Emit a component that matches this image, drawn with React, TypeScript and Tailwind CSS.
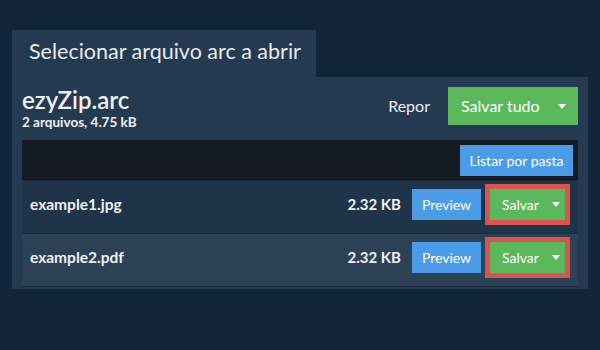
import React from "react";

function Caret() {
  return (
    <span className="inline-block w-0 h-0 border-t-[5px] border-t-white border-x-[4.5px] border-x-transparent" />
  );
}

function Row({ name, size, bg }: { name: string; size: string; bg: string }) {
  return (
    <div className={`flex items-center pl-[8px] pr-[8px] pt-[8px] pb-[13px] border-t border-[#1a2a3c] ${bg}`}>
      <div className="flex-1 text-[15.5px] font-bold text-[#eef0f2]">{name}</div>
      <div className="text-[15px] font-bold text-[#eef0f2] mr-[11px]">{size}</div>
      <button className="w-[69px] h-[31px] bg-[#4b9be6] text-white text-[14px] mr-[4px] flex items-center justify-center">
        Preview
      </button>
      <div className="border-[5px] border-[#d9534f] -my-[5px]">
        <button className="w-[75px] h-[31px] bg-[#5cb85c] text-white text-[14px] flex items-center pl-[12px]">
          <span>Salvar</span>
          <span className="ml-[13px] flex items-center">
            <Caret />
          </span>
        </button>
      </div>
    </div>
  );
}

export default function App() {
  return (
    <div
      className="w-[600px] h-[350px] bg-[#12243a] pt-[30px] px-[12px]"
      style={{ fontFamily: "Lato, 'Open Sans', sans-serif" }}
    >
      <div className="w-[304px] h-[47px] bg-[#243a50] pl-[17px] pt-[6px] text-[21.5px] leading-[30px] text-[#e8ebee]">
        Selecionar arquivo arc a abrir
      </div>
      <div className="w-[576px] bg-[#243a50] px-[10px] pb-[2px]">
        <div className="h-[63px] flex items-start justify-between pt-[10px]">
          <div className="text-[#eef0f2]">
            <div className="text-[24px] leading-[26px] font-semibold">ezyZip.arc</div>
            <div className="text-[13.5px] leading-[16px] font-bold mt-[1px]">2 arquivos, 4.75 kB</div>
          </div>
          <div className="flex items-center">
            <span className="text-[16px] text-[#e8ebee] mr-[18px]">Repor</span>
            <button className="w-[130px] h-[38px] bg-[#5cb85c] text-white text-[16px] flex items-center pl-[13px]">
              <span>Salvar tudo</span>
              <span className="ml-[18px] flex items-center">
                <Caret />
              </span>
            </button>
          </div>
        </div>
        <div className="border-b border-[#1a2a3c]">
          <div className="h-[40px] bg-[#141a22] flex items-center justify-end pr-[5px]">
            <button className="w-[113px] h-[31px] bg-[#4b9be6] text-white text-[14px] flex items-center justify-center">
              Listar por pasta
            </button>
          </div>
          <Row name="example1.jpg" size="2.32 KB" bg="bg-[#1f3349]" />
          <Row name="example2.pdf" size="2.32 KB" bg="bg-[#2c4056]" />
        </div>
      </div>
    </div>
  );
}
